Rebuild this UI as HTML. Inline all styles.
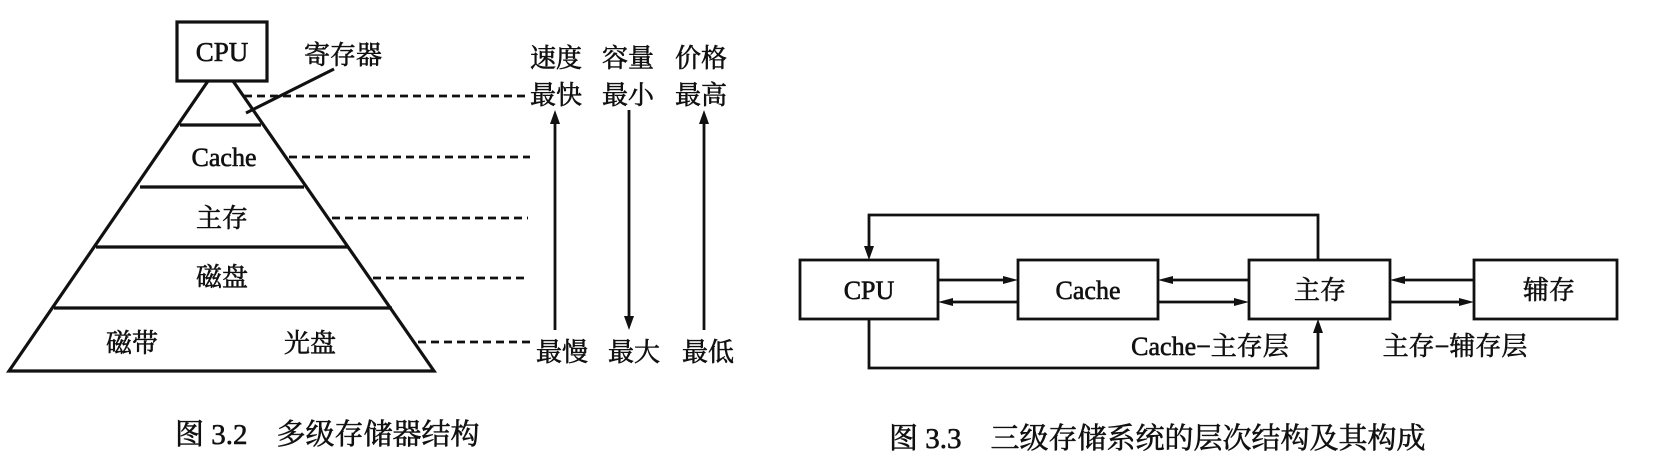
<!DOCTYPE html>
<html><head><meta charset="utf-8"><style>
html,body{margin:0;padding:0;background:#fff;}
svg{display:block;}
text{font-family:"Liberation Serif","Noto Serif CJK SC",serif;fill:#111;stroke:#111;stroke-width:0.6;}
</style></head><body>
<svg width="1666" height="460" viewBox="0 0 1666 460" xmlns="http://www.w3.org/2000/svg">
<g stroke="#111" stroke-width="3.2" fill="none">
<rect x="177" y="22" width="90" height="59"/>
<path d="M208 81 L9 371 L434 371 L233 81"/>
<line x1="180" y1="125" x2="261" y2="125"/>
<line x1="140" y1="187" x2="304" y2="187"/>
<line x1="96" y1="247" x2="348" y2="247"/>
<line x1="54" y1="308" x2="392" y2="308"/>
<line x1="334" y1="69" x2="246" y2="113"/>
</g>
<g stroke="#111" stroke-width="2.7" stroke-dasharray="8,5" fill="none">
<line x1="244" y1="96" x2="526" y2="96"/>
<line x1="289" y1="157" x2="530" y2="157"/>
<line x1="332" y1="218" x2="528" y2="218"/>
<line x1="373" y1="278" x2="526" y2="278"/>
<line x1="418" y1="342" x2="530" y2="342"/>
</g>
<g stroke="#111" stroke-width="2.8">
<line x1="555" y1="118" x2="555" y2="330"/>
<line x1="629" y1="110" x2="629" y2="320"/>
<line x1="704" y1="118" x2="704" y2="330"/>
</g>
<g fill="#111">
<path d="M555 110 L550 124 L560 124Z"/>
<path d="M629 330 L624 316 L634 316Z"/>
<path d="M704 110 L699 124 L709 124Z"/>
</g>
<g font-size="26" text-anchor="middle">
<text x="222" y="61" font-size="27">CPU</text>
<text x="343" y="64">寄存器</text>
<text x="224" y="166">Cache</text>
<text x="222" y="227">主存</text>
<text x="222" y="286">磁盘</text>
<text x="132" y="352">磁带</text>
<text x="310" y="352">光盘</text>
<text x="556" y="67">速度</text>
<text x="628" y="67">容量</text>
<text x="701" y="67">价格</text>
<text x="556" y="104">最快</text>
<text x="628" y="104">最小</text>
<text x="701" y="104">最高</text>
<text x="562" y="361">最慢</text>
<text x="634" y="361">最大</text>
<text x="708" y="361">最低</text>
</g>
<text x="175" y="444" font-size="29">图 3.2　多级存储器结构</text>

<g stroke="#111" stroke-width="2.8" fill="none">
<rect x="800" y="260" width="138" height="59"/>
<rect x="1018" y="260" width="140" height="59"/>
<rect x="1249" y="260" width="141" height="59"/>
<rect x="1474" y="260" width="143" height="59"/>
<path d="M1318 260 V215 H869 V250"/>
<path d="M869 319 V368 H1318 V328"/>
<line x1="938" y1="280" x2="1012" y2="280"/>
<line x1="944" y1="302" x2="1018" y2="302"/>
<line x1="1164" y1="280" x2="1249" y2="280"/>
<line x1="1158" y1="302" x2="1243" y2="302"/>
<line x1="1396" y1="280" x2="1474" y2="280"/>
<line x1="1390" y1="302" x2="1468" y2="302"/>
</g>
<g fill="#111">
<path d="M869 260 L864 246 L874 246Z"/>
<path d="M1318 319 L1313 333 L1323 333Z"/>
<path d="M1018 280 L1003 276 L1003 284Z"/>
<path d="M938 302 L953 298 L953 306Z"/>
<path d="M1158 280 L1173 276 L1173 284Z"/>
<path d="M1249 302 L1234 298 L1234 306Z"/>
<path d="M1390 280 L1405 276 L1405 284Z"/>
<path d="M1474 302 L1459 298 L1459 306Z"/>
</g>
<g font-size="26" text-anchor="middle">
<text x="869" y="299">CPU</text>
<text x="1088" y="299">Cache</text>
<text x="1320" y="299">主存</text>
<text x="1549" y="299">辅存</text>
<text x="1210" y="355">Cache−主存层</text>
<text x="1455" y="355">主存−辅存层</text>
</g>
<text x="889" y="448" font-size="29">图 3.3　三级存储系统的层次结构及其构成</text>
</svg>
</body></html>
